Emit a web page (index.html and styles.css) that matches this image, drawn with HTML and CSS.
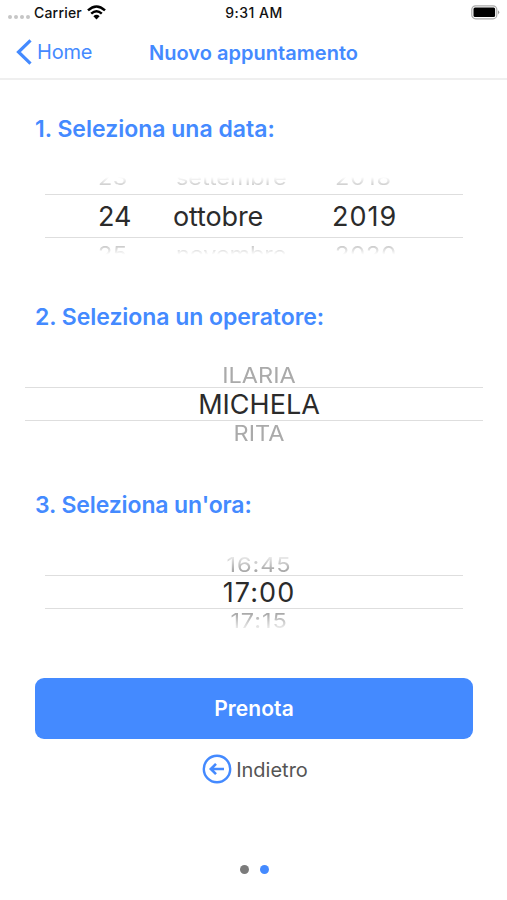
FILE: index.html
```html
<!DOCTYPE html>
<html lang="it">
<head>
<meta charset="utf-8">
<title>Nuovo appuntamento</title>
<link rel="stylesheet" href="styles.css">
</head>
<body>
<header>
  <div class="status">
    <div class="carrier">
      <span class="signal"><i></i><i></i><i></i><i></i></span>
      <span class="carrier-name">Carrier</span>
      <svg class="wifi" width="19" height="15" viewBox="0 0 19 15" fill="none" stroke="#000" stroke-width="2.5"><path d="M1 5.4Q9.500-2.400 18 5.400M4.200 8.600Q9.500 3.800 14.800 8.600"/><path d="M9.500 14.500 6.400 11.200Q9.500 8.500 12.600 11.200Z" fill="#000" stroke="none"/></svg>
    </div>
    <span class="clock">9:31 AM</span>
    <svg class="battery" width="29" height="15" viewBox="0 0 29 15"><rect x=".8" y=".8" width="25" height="13" rx="3.800" fill="none" stroke="#aaa" stroke-width="1.200"/><rect x="2.500" y="2.500" width="21.600" height="9.600" rx="1.500" fill="#000"/><path d="M27 5.300Q29.500 7.300 27 9.500Z" fill="#999"/></svg>
  </div>
  <nav class="nav">
    <a class="home"><svg width="16" height="26" viewBox="0 0 16 26" fill="none" stroke="#448aff" stroke-width="3.200"><path d="M14.500 1.300 2.500 13 14.500 24.700"/></svg><span class="home-label">Home</span></a>
    <h1>Nuovo appuntamento</h1>
  </nav>
</header>
<main>
  <section>
    <h2 class="h-date">1. Seleziona una data:</h2>
    <div class="picker date">
      <div class="row near prev"><span>23</span><span class="month">settembre</span><span class="year">2018</span></div>
      <div class="row current"><span>24</span><span class="month">ottobre</span><span class="year">2019</span></div>
      <div class="row near next"><span>25</span><span class="month">novembre</span><span class="year">2020</span></div>
    </div>
  </section>
  <section>
    <h2 class="h-operator">2. Seleziona un operatore:</h2>
    <div class="picker operator">
      <div class="row near prev"><span>ILARIA</span></div>
      <div class="row current"><span>MICHELA</span></div>
      <div class="row near next"><span>RITA</span></div>
    </div>
  </section>
  <section>
    <h2 class="h-time">3. Seleziona un'ora:</h2>
    <div class="picker time">
      <div class="row near prev"><span>16:45</span></div>
      <div class="row current"><span>17:00</span></div>
      <div class="row near next"><span>17:15</span></div>
    </div>
  </section>
  <button class="book"><span>Prenota</span></button>
  <a class="back"><svg width="30" height="30" viewBox="0 0 30 30" fill="none" stroke="#448aff" stroke-width="2.400"><circle cx="15" cy="15" r="13.200"/><path d="M22 15H9M14 9.800 8.800 15 14 20.200" stroke-width="2.600"/></svg><span>Indietro</span></a>
  <div class="pages"><i></i><i class="active"></i></div>
</main>
</body>
</html>
```
FILE: styles.css
```css
* { box-sizing: border-box; }
body {
  margin: 0;
  width: 507px;
  height: 900px;
  overflow: hidden;
  background: #fff;
  color: #2b2b2b;
  font-family: Inter, "Liberation Sans", sans-serif;
}
header { height: 80px; border-bottom: 2px solid #efefef; }
.status {
  display: grid;
  grid-template-columns: 1fr auto 1fr;
  align-items: center;
  height: 26px;
  padding: 0 7px 1px 8px;
  color: #111;
  font-size: 14px;
  font-weight: 500;
}
.carrier { display: flex; align-items: center; }
.carrier-name { letter-spacing: .2px; }
.clock { letter-spacing: .5px; }
.signal { display: flex; gap: 2px; margin: 8px 4px 0 0; }
.signal i { width: 4px; height: 4px; border-radius: 50%; background: #c6c6c6; }
.wifi { margin-left: 5px; }
.battery { justify-self: end; }
.nav { position: relative; display: flex; align-items: center; justify-content: center; height: 52px; padding-top: 1px; color: #448aff; }
.home { position: absolute; left: 16px; top: 13px; display: flex; align-items: center; gap: 5px; font-size: 20px; line-height: 26px; }
.home-label { letter-spacing: -.2px; }
h1 { margin: 0; font-size: 20px; line-height: 26px; font-weight: 600; letter-spacing: .03px; }
section { height: 188px; padding-top: 34px; }
h2 { margin: 0 0 0 35px; color: #448aff; font-size: 23px; line-height: 30px; font-weight: 600; white-space: nowrap; }
.h-operator { letter-spacing: -.05px; }
.h-time { letter-spacing: -.12px; }
.picker { display: flex; flex-direction: column; font-size: 27px; }
.row { display: flex; flex: none; justify-content: center; align-items: center; overflow: hidden; white-space: nowrap; }
.near { color: #aaa; }
.near span { transform: scaleY(.93); }
.current { border: solid #dedede; border-width: 1.5px 0; }
.date { margin: 33px 44px 0 45px; }
.date .row { display: grid; grid-template-columns: 75px 159px auto; justify-content: start; padding-left: 53px; }
.date .current .month { letter-spacing: -.15px; }
.date .current .year { letter-spacing: 1px; }
.date .near span { font-size: 23.5px; line-height: 30px; color: #c2c2c2; letter-spacing: .3px; }
.date .near span { transform: scaleY(.86); transform-origin: left center; }
.date .near .month { margin-left: 3px; letter-spacing: -.1px; }
.date .near .year { margin-left: 3px; letter-spacing: .9px; }
.date .prev { height: 17px; align-items: start; -webkit-mask-image: linear-gradient(transparent, #000 60%); }
.date .prev span { margin-top: -14px; }
.date .current { height: 44px; }
.date .next { height: 17px; align-items: start; -webkit-mask-image: linear-gradient(#000 40%, transparent 98%); }
.date .next span { margin-top: 1px; }
.operator { margin: 30px 24px 0 25px; }
.operator span, .time span { margin-left: 10px; }
.operator .near, .time .near { height: 25px; font-size: 23.5px; }
.operator .current, .time .current { height: 34px; }
.operator .prev span { margin-top: 2px; }
.time { margin: 30px 44px 0 45px; }
.time .current span { letter-spacing: 1.1px; }
.time .near span { letter-spacing: .9px; }
.time .prev span { margin-top: 4px; transform: scaleY(.88); }
.time .next span { margin-top: -3px; transform: scaleY(.88); }
.time .prev { -webkit-mask-image: linear-gradient(transparent 10%, #000 80%); }
.time .next { -webkit-mask-image: linear-gradient(#000 20%, transparent 95%); }
.book { display: flex; align-items: center; justify-content: center; width: 438px; height: 61px; margin: 34px 0 0 35px; padding: 0; border: 0; border-radius: 9px; background: #448aff; color: #fff; font: 600 21px Inter, sans-serif; letter-spacing: .1px; }
.back { display: flex; align-items: center; justify-content: center; gap: 4px; height: 30px; margin: 15px 0 0 3px; color: #555; font-size: 20px; }
.back span { padding-top: 1px; }
.pages { display: flex; justify-content: center; gap: 11px; margin: 81px 0 0 1px; }
.pages i { width: 9px; height: 9px; border-radius: 50%; background: #7b7b7b; }
.pages .active { background: #448aff; }
```
